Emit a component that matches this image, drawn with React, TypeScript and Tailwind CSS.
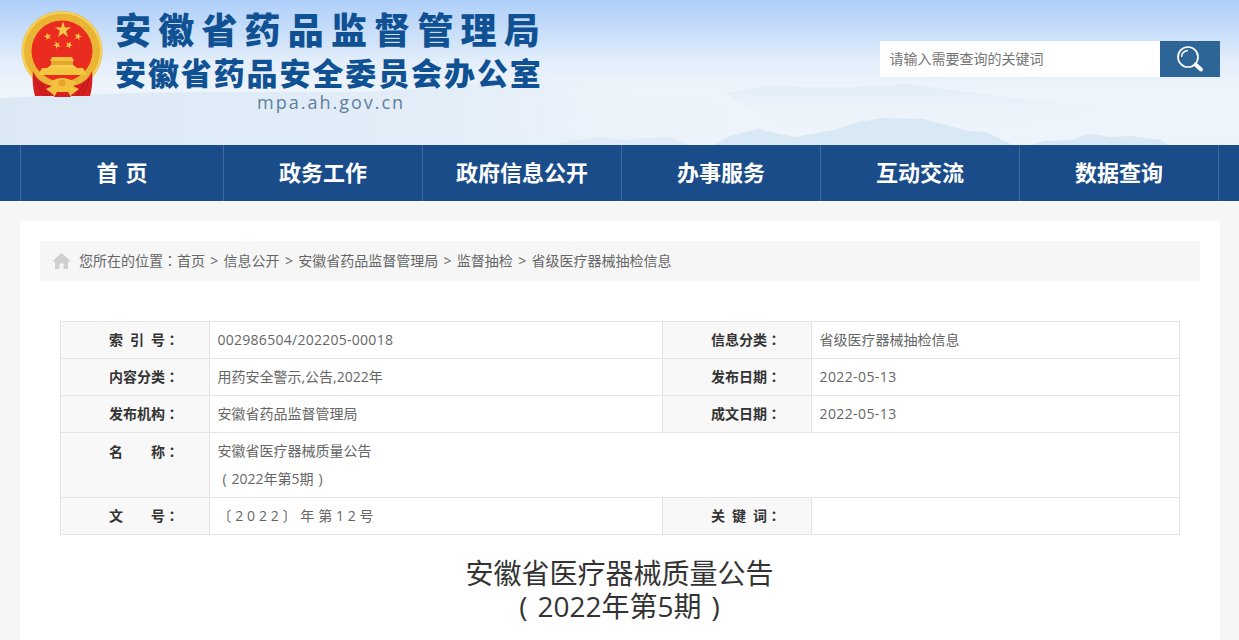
const cjk = "font-['Open_Sans','Noto_Sans_CJK_SC',sans-serif]";

const Pn = ({ children }: { children: React.ReactNode }) => (
  <span className="font-['Noto_Sans_CJK_TC',sans-serif]">{children}</span>
);
const Paren = ({ children }: { children: React.ReactNode }) => (
  <span className="inline-block w-[1em] text-center font-['Open_Sans',sans-serif]">{children}</span>
);

const Star = ({ cx, cy, r, rot = 0 }: { cx: number; cy: number; r: number; rot?: number }) => {
  const pts: string[] = [];
  for (let i = 0; i < 10; i++) {
    const rad = i % 2 === 0 ? r : r * 0.38;
    const a = ((-90 + rot + i * 36) * Math.PI) / 180;
    pts.push(`${(cx + rad * Math.cos(a)).toFixed(2)},${(cy + rad * Math.sin(a)).toFixed(2)}`);
  }
  return <polygon points={pts.join(" ")} fill="#f6c945" />;
};

const Emblem = () => (
  <svg width="84" height="90" viewBox="0 0 84 90" className="shrink-0">
    <ellipse cx="41" cy="42" rx="40.5" ry="40" fill="#eab535" />
    <ellipse cx="41" cy="42" rx="39" ry="38.5" fill="none" stroke="#f5d35c" strokeWidth="2" />
    <circle cx="41" cy="42" r="30.5" fill="#ea2b20" />
    <Star cx={42} cy={21} r={8.5} />
    <Star cx={26.7} cy={27.5} r={4} rot={-15} />
    <Star cx={57} cy={27.5} r={4} rot={15} />
    <Star cx={36} cy={36} r={4} rot={-25} />
    <Star cx={48} cy={36} r={4} rot={25} />
    <path d="M31 48 H51 L53 52 H29Z" fill="#f3c444" />
    <path d="M30 52h22v4H30z" fill="#e5a62c" />
    <path d="M26 59 L30 56 H52 L56 59Z" fill="#f6cf52" />
    <path d="M17 66 L21 59 H62 L66 66Z" fill="#f4c63f" />
    <path d="M12 62 C15 70 22 75 31 77 L33 87 L14 87 C12 80 11 71 12 62Z" fill="#d71f20" />
    <path d="M71 62 C68 70 61 75 52 77 L50 87 L69 87 C71 80 72 71 71 62Z" fill="#d71f20" />
    <path d="M15 70 C17 77 20 82 23 87 M20 74 C22 79 25 84 27 87 M68 70 C66 77 63 82 60 87 M63 74 C61 79 58 84 56 87" stroke="#b3151a" strokeWidth="1" fill="none" />
    <path d="M28 74 Q41 64 55 74 L52 77 L58 80 L49 87 L45 83 H38 L34 87 L25 80 L31 77Z" fill="#f3c13d" />
    <circle cx="41" cy="74" r="3.5" fill="#e6a52a" />
    <path d="M36 83h11l3 5H33z" fill="#d8201f" />
  </svg>
);

const SearchIcon = () => (
  <svg width="28" height="28" viewBox="0 0 28 28">
    <circle cx="12" cy="12" r="10" fill="none" stroke="#fff" strokeWidth="1.7" />
    <path d="M5.5 12A6.5 6.5 0 0 1 12 5.5" fill="none" stroke="#fff" strokeWidth="1.5" />
    <path d="M19.5 19.5 L25 24.5" stroke="#fff" strokeWidth="4" strokeLinecap="round" />
  </svg>
);

const Mountains = () => (
  <svg className="absolute inset-0 h-full w-full" viewBox="0 0 1239 145" preserveAspectRatio="none">
    <defs>
      <linearGradient id="fadeL" x1="0" y1="0" x2="1" y2="0">
        <stop offset="0" stopColor="#dce9f5" />
        <stop offset="0.55" stopColor="#e2edf8" />
        <stop offset="1" stopColor="#eaf2fa" stopOpacity="0" />
      </linearGradient>
      <linearGradient id="fadeB" x1="0" y1="0" x2="0" y2="1">
        <stop offset="0" stopColor="#e2edf7" />
        <stop offset="1" stopColor="#eaf2fa" stopOpacity="0" />
      </linearGradient>
    </defs>
    <path d="M0 98 L60 95 L178 92 L357 92 L430 88 L500 82 L540 78 L567 83 L602 87 L620 94 L674 100 L709 98 L760 110 V145 H0Z" fill="url(#fadeL)" />
    <path d="M725 93 L772 85 L800 87 L852 87 L880 86 L910 84 L968 92 L1030 100 L1100 108 L1020 128 H780Z" fill="url(#fadeB)" />
    <path d="M714 145 L730 136 L758 129 L794 137 L834 130 L858 122 L883 118 L923 119 L968 131 L986 132 L1013 145Z" fill="#d9e8f5" />
    <path d="M1030 145 L1045 141 L1070 140 L1090 134 L1111 137 L1130 136 L1160 140 L1169 145Z" fill="#d9e8f5" />
    <path d="M552 145 L575 140 L600 137 L625 140 L645 138 L670 137 L690 145Z" fill="#dfecf7" />
  </svg>
);

const nav = ["首 页", "政务工作", "政府信息公开", "办事服务", "互动交流", "数据查询"];
const crumbs = ["信息公开", "安徽省药品监督管理局", "监督抽检", "省级医疗器械抽检信息"];

const Gap = ({ w }: { w: string }) => <span className={`inline-block ${w}`} />;

const Label = ({ children }: { children: React.ReactNode }) => (
  <td className="h-[37px] border border-[#e4e4e4] bg-[#f8f8f8] pb-[2px] pl-[48px] align-middle text-[14px] font-bold text-[#333]">
    {children}
  </td>
);
const Value = ({ children, colSpan }: { children?: React.ReactNode; colSpan?: number }) => (
  <td colSpan={colSpan} className="border border-[#e4e4e4] pb-[2px] pl-[7.5px] align-middle text-[14px] text-[#666]">
    {children}
  </td>
);

export default function App() {
  return (
    <div className={`${cjk} h-screen overflow-hidden bg-[#f6f6f6]`}>
      <header className="relative h-[145px] overflow-hidden bg-[linear-gradient(180deg,#afcffa_0px,#cfe2f9_40px,#e3eefa_62px,#eef4fb_90px,#edf4fb_145px)]">
        <Mountains />
        <div className="relative flex h-full items-start pl-[21px] pr-[19px]">
          <div className="mt-[9px]"><Emblem /></div>
          <div className="ml-[10px] mt-[6px] flex flex-col font-['Noto_Sans_CJK_SC',sans-serif] font-black text-[#0f5192]">
            <div className="whitespace-nowrap text-[36px] leading-[44px] tracking-[7.2px]">安徽省药品监督管理局</div>
            <div className="mt-[2px] whitespace-nowrap text-[31px] leading-[40px] tracking-[1.9px]">安徽省药品安全委员会办公室</div>
            <div className="ml-[142px] mt-[-2px] whitespace-nowrap font-['Open_Sans',sans-serif] text-[18px] font-normal leading-[24px] tracking-[2px] text-[#5d7f9e]">mpa.ah.gov.cn</div>
          </div>
          <div className="ml-auto mt-[41px] flex h-[36px]">
            <div className="flex w-[280px] items-center bg-white pb-[2px] pl-[9.5px] text-[14px] text-[#757575]">请输入需要查询的关键词</div>
            <button className="flex w-[60px] items-center justify-center bg-[#2e6597]"><SearchIcon /></button>
          </div>
        </div>
      </header>

      <nav className="h-[56px] bg-[#1a4c89]">
        <ul className="mx-[20px] flex h-full border-r border-[#3e6a9e]">
          {nav.map((n, i) => (
            <li
              key={n}
              className={`flex h-full items-center justify-center border-l border-[#3e6a9e] pb-[4px] font-['Noto_Sans_CJK_SC',sans-serif] text-[22px] font-bold text-white [word-spacing:2px] ${i === 0 ? "w-[203px]" : "w-[199px]"}`}
            >
              {n}
            </li>
          ))}
        </ul>
      </nav>

      <main className="ml-[20px] mt-[20px] h-[500px] w-[1200px] bg-white px-[20px] pt-[20px]">
        <div className="flex h-[40px] items-center bg-[#f6f6f6] pb-[2px] pl-[12px] text-[14px] text-[#666]">
          <svg width="19" height="16" viewBox="0 0 19 16" className="mr-[8px] mt-[2px]">
            <path d="M9.5 0 L19 8.5 H16 V16 H11.5 V10.5 H7.5 V16 H3 V8.5 H0Z" fill="#cfcfcf" />
          </svg>
          <span>您所在的位置<Pn>：</Pn>首页</span>
          {crumbs.map((c) => (
            <span key={c} className="flex">
              <span className="mx-[5.3px]">&gt;</span>
              <span>{c}</span>
            </span>
          ))}
        </div>

        <div className="mx-[20px] mt-[40px]">
          <table className="w-[1120px] table-fixed border-collapse">
            <colgroup>
              <col className="w-[149px]" />
              <col className="w-[453px]" />
              <col className="w-[149px]" />
              <col />
            </colgroup>
            <tbody>
              <tr>
                <Label>索<Gap w="w-[7px]" />引<Gap w="w-[7px]" />号<Pn>：</Pn></Label>
                <Value><span className="tracking-[0.27px]">002986504/202205-00018</span></Value>
                <Label>信息分类<Pn>：</Pn></Label>
                <Value>省级医疗器械抽检信息</Value>
              </tr>
              <tr>
                <Label>内容分类<Pn>：</Pn></Label>
                <Value>用药安全警示,公告,2022年</Value>
                <Label>发布日期<Pn>：</Pn></Label>
                <Value><span className="tracking-[0.4px]">2022-05-13</span></Value>
              </tr>
              <tr>
                <Label>发布机构<Pn>：</Pn></Label>
                <Value>安徽省药品监督管理局</Value>
                <Label>成文日期<Pn>：</Pn></Label>
                <Value><span className="tracking-[0.4px]">2022-05-13</span></Value>
              </tr>
              <tr>
                <td className="h-[65px] border border-[#e4e4e4] bg-[#f8f8f8] pl-[48px] pt-[4px] align-top text-[14px] font-bold leading-[28px] text-[#333]">
                  名<Gap w="w-[28px]" />称<Pn>：</Pn>
                </td>
                <td colSpan={3} className="border border-[#e4e4e4] pl-[7.5px] pt-[4px] align-top text-[14px] leading-[28px] text-[#666]">
                  安徽省医疗器械质量公告
                  <br />
                  <Paren>(</Paren>2022年第5期<Paren>)</Paren>
                </td>
              </tr>
              <tr>
                <Label>文<Gap w="w-[28px]" />号<Pn>：</Pn></Label>
                <Value><span className="tracking-[3.8px]"><Pn>〔</Pn>2022<Pn>〕</Pn>年第12号</span></Value>
                <Label>关<Gap w="w-[7px]" />键<Gap w="w-[7px]" />词<Pn>：</Pn></Label>
                <Value />
              </tr>
            </tbody>
          </table>
        </div>

        <h1 className="mt-[22px] pr-[1px] text-center text-[28px] font-normal leading-[33px] text-[#333]">
          安徽省医疗器械质量公告
          <br />
          <Paren>(</Paren>2022年第5期<Paren>)</Paren>
        </h1>
      </main>
    </div>
  );
}
